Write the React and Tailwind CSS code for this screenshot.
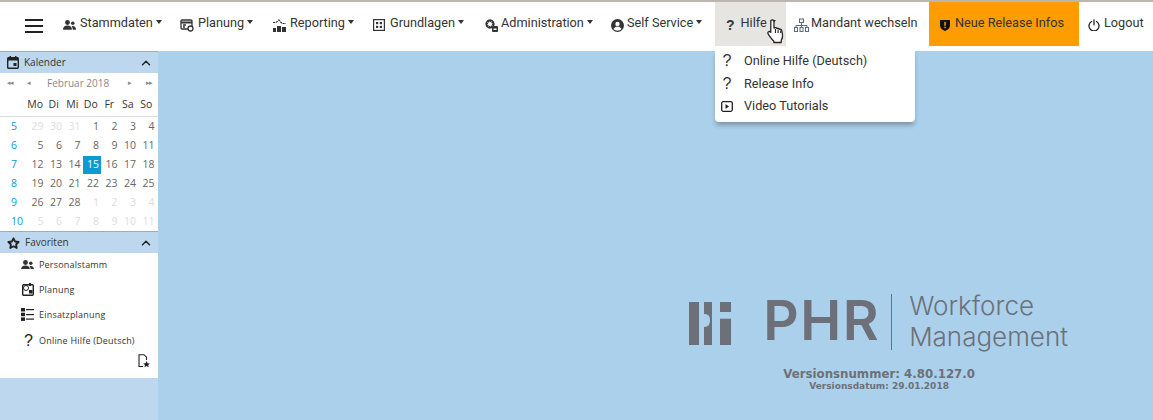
import React from 'react';
import { ChevronUp } from 'lucide-react';

const rowsCal = [
  { w: 5, d: [[29, 0], [30, 0], [31, 0], [1, 1], [2, 1], [3, 1], [4, 1]] },
  { w: 6, d: [[5, 1], [6, 1], [7, 1], [8, 1], [9, 1], [10, 1], [11, 1]] },
  { w: 7, d: [[12, 1], [13, 1], [14, 1], [15, 2], [16, 1], [17, 1], [18, 1]] },
  { w: 8, d: [[19, 1], [20, 1], [21, 1], [22, 1], [23, 1], [24, 1], [25, 1]] },
  { w: 9, d: [[26, 1], [27, 1], [28, 1], [1, 0], [2, 0], [3, 0], [4, 0]] },
  { w: 10, d: [[5, 0], [6, 0], [7, 0], [8, 0], [9, 0], [10, 0], [11, 0]] },
];

const Caret = () => <span className="ml-[3px] mb-[5px] w-0 h-0 border-x-[3.500px] border-x-transparent border-t-[4px] border-t-[#333]" />;

const Question = ({ className }) => <span className={'font-["Liberation_Sans",sans-serif] ' + className}>?</span>;

function PeopleIcon({ size = 13 }) {
  return (
    <svg width={size} height={size * 0.75} viewBox="0 0 16 12" fill="#333">
      <circle cx="5.500" cy="3" r="3" />
      <path d="M0 12c0-3.500 2.200-5.200 5.500-5.200S11 8.500 11 12z" />
      <circle cx="12" cy="4" r="2.200" />
      <path d="M12 7.500c2.500 0 4 1.500 4 4.500h-4c0-1.800-.5-3.200-1.500-4.200.4-.2.900-.3 1.500-.3z" />
    </svg>
  );
}

function PlanIcon() {
  return (
    <svg width="14" height="14" viewBox="0 0 14 14" fill="none" stroke="#333" strokeWidth="1.300">
      <rect x="1" y="2" width="11" height="9" rx="1" />
      <path d="M1 4.500h11" strokeWidth="2" />
      <path d="M3 7h3M3 9h2" />
      <circle cx="10.500" cy="10.500" r="2.500" fill="#fff" />
    </svg>
  );
}

function ReportIcon() {
  return (
    <svg width="13" height="13" viewBox="0 0 13 13" fill="#333">
      <rect x="0" y="9" width="3" height="4" />
      <rect x="4" y="7" width="4" height="6" />
      <rect x="9" y="8" width="4" height="5" />
      <path d="M0 3.500h3l3-2.500 3 3.500h4" fill="none" stroke="#333" strokeWidth="1.200" strokeDasharray="2.200 .8" />
    </svg>
  );
}

function GridIcon() {
  return (
    <svg width="12" height="12" viewBox="0 0 12 12" fill="#333">
      <rect x=".6" y=".6" width="10.800" height="10.800" fill="none" stroke="#333" strokeWidth="1.200" />
      <rect x="3" y="3" width="2.200" height="2.200" />
      <rect x="6.800" y="3" width="2.200" height="2.200" />
      <rect x="3" y="6.800" width="2.200" height="2.200" />
      <rect x="6.800" y="6.800" width="2.200" height="2.200" />
    </svg>
  );
}

function GearIcon() {
  return (
    <svg width="13" height="13" viewBox="0 0 13 13" fill="#333">
      <circle cx="5" cy="5" r="3.200" fill="none" stroke="#333" strokeWidth="2.400" strokeDasharray="1.800 .6" />
      <circle cx="5" cy="5" r="3.800" fill="none" stroke="#333" strokeWidth="1.400" />
      <rect x="7" y="7" width="6" height="6" rx="1" />
      <rect x="8.500" y="9.500" width="3" height="1.500" fill="#fff" />
    </svg>
  );
}

function SelfIcon() {
  return (
    <svg width="13" height="13" viewBox="0 0 13 13">
      <circle cx="6.500" cy="6.500" r="6.500" fill="#333" />
      <circle cx="6.500" cy="5" r="2.200" fill="#fff" />
      <path d="M2.500 10c1-1.700 2.300-2.300 4-2.300s3 .6 4 2.300c-1 1-2.400 1.700-4 1.700s-3-.7-4-1.700z" fill="#fff" />
    </svg>
  );
}

function OrgIcon() {
  return (
    <svg width="15" height="15" viewBox="0 0 15 15" fill="none" stroke="#5b6b78" strokeWidth="1">
      <rect x="5.500" y="1" width="4" height="3.500" />
      <path d="M7.500 4.500v3M2 7.500h11M2 7.500v2M7.500 7.500v2M13 7.500v2" />
      <rect x=".5" y="9.500" width="3" height="4" />
      <rect x="6" y="9.500" width="3" height="4" />
      <rect x="11.500" y="9.500" width="3" height="4" />
    </svg>
  );
}

function ShieldIcon() {
  return (
    <svg width="10" height="12" viewBox="0 0 10 12">
      <path d="M0 1h10v5.500c0 2.500-2 4.500-5 5.500-3-1-5-3-5-5.500z" fill="#111" />
      <rect x="4.300" y="2.800" width="1.500" height="4" fill="#ff9c00" />
      <rect x="4.300" y="7.700" width="1.500" height="1.500" fill="#ff9c00" />
    </svg>
  );
}

function PowerIcon() {
  return (
    <svg width="12" height="12" viewBox="0 0 12 12" fill="none" stroke="#222" strokeWidth="1.300" strokeLinecap="round">
      <path d="M3.500 2.500a5 5 0 1 0 5 0" />
      <path d="M6 .8v5" />
    </svg>
  );
}

function HandCursor() {
  return (
    <svg width="19" height="26" viewBox="0 0 18 24">
      <path d="M5 1.500c1 0 1.600.7 1.600 1.700v6l1.400-.3c.8-.1 1.300.2 1.500.8 1-.4 1.900-.1 2.200.7 1-.3 2 .1 2.200 1l.8 4c.3 2-.3 4-1.200 5.500v2H6.500v-1.500C5 20.500 3 17.500 1.200 15c-.7-1-.4-1.900.3-2.300.7-.4 1.500-.1 2.100.6V3.200C3.500 2.200 4 1.500 5 1.500z" fill="#fff" stroke="#222" strokeWidth="1.200" strokeLinejoin="round" />
      <path d="M8 10v4M10.500 10.500V14M13 11.500V14" stroke="#222" strokeWidth="1" />
    </svg>
  );
}

function CalendarIcon() {
  return (
    <svg width="12" height="13" viewBox="0 0 12 13">
      <rect x=".7" y="1.700" width="10.600" height="10.600" rx="1" fill="none" stroke="#222" strokeWidth="1.400" />
      <rect x=".7" y="1.700" width="10.600" height="2.800" fill="#222" />
      <rect x="2.500" y="0" width="1.500" height="2.500" fill="#222" />
      <rect x="8" y="0" width="1.500" height="2.500" fill="#222" />
      <rect x="6.500" y="7" width="3" height="3" fill="#222" />
    </svg>
  );
}

function StarIcon() {
  return (
    <svg width="13" height="12" viewBox="0 0 13 12">
      <path d="M6.500 1.300l1.600 3.200 3.500.5-2.500 2.500.6 3.500-3.200-1.700-3.200 1.700.6-3.500L1.400 5l3.500-.5z" fill="#bdd7ee" stroke="#222" strokeWidth="1.800" strokeLinejoin="round" />
    </svg>
  );
}

function NavItem({ icon, label, gap = 'ml-[4px]', caret = true, className = '' }) {
  return (
    <a className={'flex items-center h-[44px] text-[12.700px] text-[#333] whitespace-nowrap ' + className}>
      <span className="flex items-center justify-center mt-[2px]">{icon}</span>
      <span className={gap + ' mb-[3px]'}>{label}</span>
      {caret && <Caret />}
    </a>
  );
}

function Header() {
  return (
    <div className="relative h-[51px] bg-white border-t-2 border-[#bdb6b0] shrink-0 font-['Roboto',sans-serif]">
      <nav className="flex items-start h-full">
        <button className="ml-[25px] mr-[20px] mt-[17px] flex flex-col gap-[4px] w-[18px]">
          <span className="h-[2px] bg-[#222]" />
          <span className="h-[2px] bg-[#222]" />
          <span className="h-[2px] bg-[#222]" />
        </button>
        <NavItem icon={<PeopleIcon />} label="Stammdaten" className="w-[117px]" />
        <NavItem icon={<PlanIcon />} label="Planung" className="w-[93px]" />
        <NavItem icon={<ReportIcon />} label="Reporting" className="w-[100px]" />
        <NavItem icon={<GridIcon />} label="Grundlagen" gap="ml-[5px]" className="w-[112px]" />
        <NavItem icon={<GearIcon />} label="Administration" gap="ml-[3px]" className="w-[126px]" />
        <NavItem icon={<SelfIcon />} label="Self Service" gap="ml-[3px]" className="w-[104px]" />
        <NavItem icon={<Question className="text-[14px] font-bold text-[#333]" />} label="Hilfe" gap="ml-[6px]" className="w-[71px] bg-[#e6e5e2] pl-[11px]" />
        <NavItem icon={<OrgIcon />} label="Mandant wechseln" gap="ml-[2px]" caret={false} className="ml-[8px] w-[135px]" />
        <NavItem icon={<ShieldIcon />} label="Neue Release Infos" gap="ml-[5px]" caret={false} className="w-[150px] bg-[#ff9c00] pl-[11px]" />
        <NavItem icon={<PowerIcon />} label="Logout" caret={false} className="ml-[9px]" />
      </nav>

      <div className="absolute left-[715px] top-[47px] z-10 w-[200px] h-[73px] bg-white rounded-b-[4px] shadow-[0_4px_5px_-1px_rgba(0,0,0,0.3)] pt-[1px] text-[12.700px] text-[#333]">
        <div className="flex items-center h-[22px]">
          <Question className="w-[24px] text-center text-[16px] font-medium" />
          <span className="ml-[5px]">Online Hilfe (Deutsch)</span>
        </div>
        <div className="flex items-center h-[23px]">
          <Question className="w-[24px] text-center text-[16px] font-medium" />
          <span className="ml-[5px]">Release Info</span>
        </div>
        <div className="flex items-center h-[22px]">
          <span className="w-[24px] flex justify-center">
            <svg width="12" height="11" viewBox="0 0 12 11"><rect x=".7" y=".7" width="10.600" height="9.600" rx="1.500" fill="none" stroke="#222" strokeWidth="1.300" /><path d="M4.500 3l3.500 2.500-3.500 2.500z" fill="#222" /></svg>
          </span>
          <span className="ml-[5px]">Video Tutorials</span>
        </div>
      </div>

      <div className="absolute left-[767px] top-[16px] z-20">
        <HandCursor />
      </div>
    </div>
  );
}

function PanelHead({ icon, title }) {
  return (
    <div className="flex items-center h-[22px] bg-[#bdd7ee] border-t border-[#a4abb3] pl-[7px] pr-[5px] text-[10px] text-[#333]">
      {icon}
      <span className="ml-[5px] flex-1">{title}</span>
      <ChevronUp size={14} strokeWidth={2.500} color="#222" />
    </div>
  );
}

function CalendarPanel() {
  return (
    <div className="bg-white">
      <PanelHead icon={<CalendarIcon />} title="Kalender" />
      <div className="flex items-center h-[21px] pl-[7px] pr-[6px] text-[10px] text-[#888]">
        <span className="w-[20px] text-[7px] tracking-[-1px]">◂◂</span>
        <span className="w-[18px] text-[7px]">◂</span>
        <span className="flex-1 ml-[2px]">Februar 2018</span>
        <span className="w-[18px] text-[7px]">▸</span>
        <span className="text-[7px] tracking-[-1px]">▸▸</span>
      </div>
      <div className="grid grid-cols-[26px_repeat(7,18.500px)] h-[23px] items-center text-[10.500px] text-[#333] border-b border-[#ddd]">
        <span />
        {['Mo', 'Di', 'Mi', 'Do', 'Fr', 'Sa', 'So'].map((d) => (
          <span key={d} className="text-center">{d}</span>
        ))}
      </div>
      {rowsCal.map((r) => (
        <div key={r.w} className="grid grid-cols-[27px_repeat(7,18.500px)] h-[19px] items-center text-[10.500px]">
          <span className="pl-[11px] text-[#0a9bd8]">{r.w}</span>
          {r.d.map(([n, s], i) => (
            <span
              key={i}
              className={
                s === 2
                  ? 'h-[18px] flex items-center justify-end pr-[2px] bg-[#0a9bd0] text-white'
                  : s === 1
                  ? 'text-right pr-[2px] text-[#666]'
                  : 'text-right pr-[2px] text-[#ddd]'
              }
            >
              {n}
            </span>
          ))}
        </div>
      ))}
    </div>
  );
}

function FavRow({ icon, label, className = 'h-[25px]' }) {
  return (
    <div className={'flex items-center text-[9px] text-[#333] tracking-[0.2px] ' + className}>
      <span className="w-[39px] flex justify-end pr-[5px]">{icon}</span>
      {label}
    </div>
  );
}

function FavPanel() {
  return (
    <div className="bg-white">
      <PanelHead icon={<StarIcon />} title="Favoriten" />
      <div className="h-[126px] -mt-[1px]">
        <FavRow icon={<PeopleIcon size={13} />} label="Personalstamm" />
        <FavRow
          icon={
            <svg width="12" height="13" viewBox="0 0 12 13">
              <rect x=".7" y="1.700" width="10.600" height="10.600" rx="1" fill="none" stroke="#222" strokeWidth="1.400" />
              <circle cx="4" cy="5" r="2.500" fill="none" stroke="#222" />
              <rect x="7" y="7" width="3.500" height="3.500" fill="#222" />
              <rect x="7" y="0" width="2" height="3" fill="#222" />
            </svg>
          }
          label="Planung"
        />
        <FavRow
          icon={
            <svg width="13" height="13" viewBox="0 0 13 13" fill="#222">
              <rect x="0" y="0" width="4" height="3.500" />
              <rect x="0" y="4.700" width="4" height="3.500" />
              <rect x="0" y="9.400" width="4" height="3.500" />
              <rect x="5" y="1" width="8" height="1.200" />
              <rect x="5" y="6" width="8" height="1.200" />
              <rect x="5" y="10.500" width="8" height="1.200" />
            </svg>
          }
          label="Einsatzplanung"
        />
        <FavRow icon={<Question className="text-[16px] text-[#222] mr-[1px]" />} label="Online Hilfe (Deutsch)" className="h-[27px]" />
        <div className="flex justify-end pr-[8px]">
          <svg width="12" height="14" viewBox="0 0 12 14" fill="none" stroke="#222" strokeWidth="1.100">
            <path d="M5 12.500H1V.7h5l2.500 2.500V6" />
            <path d="M8.500 7l1.100 2.200 2.200.3-1.600 1.500.4 2.200-2.100-1.100-2 1.100.4-2.200L5.300 9.500l2.200-.3z" fill="#222" stroke="none" />
          </svg>
        </div>
      </div>
    </div>
  );
}

function Logo() {
  return (
    <div className="flex items-center text-[#6d7078]">
      <svg width="42" height="43" viewBox="0 0 42 43" fill="#6d7078">
        <rect x="0" y="0" width="10" height="43" />
        <path d="M15 0h8v43h-8V25c5 0 6-3.500 6-7 0-3.500-1.500-6-6-6z" />
        <rect x="31" y="0" width="11" height="10" />
        <rect x="31" y="16.700" width="11" height="26.300" />
      </svg>
      <span className="ml-[32px] -mt-[5px] font-['Inter',sans-serif] font-semibold text-[55px] leading-none tracking-[1.500px]">PHR</span>
      <span className="ml-[11px] -mt-[2px] w-[1px] h-[56px] bg-[#6d7078]" />
      <div className="ml-[17px] font-['Inter',sans-serif] font-light text-[26px] leading-[31px] -mt-[4px]">
        <div>Workforce</div>
        <div>Management</div>
      </div>
    </div>
  );
}

export default function App() {
  return (
    <div className="flex flex-col h-[420px] w-[1153px] overflow-hidden">
      <Header />
      <div className="flex flex-1 min-h-0">
        <aside className="w-[158px] shrink-0 bg-[#bdd7ee] font-['Open_Sans',sans-serif]">
          <CalendarPanel />
          <FavPanel />
        </aside>
        <main className="flex-1 bg-[#abd0eb] flex flex-col items-end pt-[243px] pr-[85px]">
          <Logo />
          <div className="mt-[15px] mr-[93px] flex flex-col items-center font-['DejaVu_Sans',sans-serif] font-bold text-[#6d7078]">
            <span className="text-[11.800px] leading-[14px]">Versionsnummer: 4.80.127.0</span>
            <span className="text-[9px] leading-[10px]">Versionsdatum: 29.01.2018</span>
          </div>
        </main>
      </div>
    </div>
  );
}
